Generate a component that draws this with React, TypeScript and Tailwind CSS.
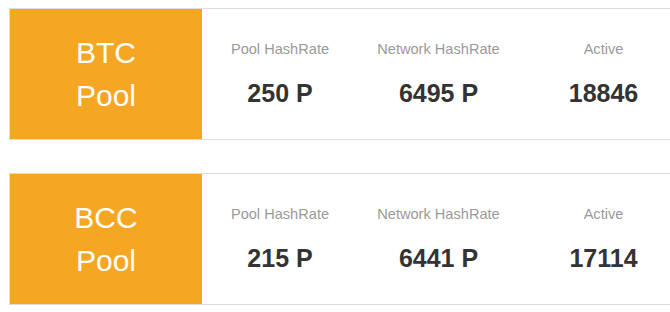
import React from "react";

type Pool = { name: string; pool: string; network: string; active: string };

const pools: Pool[] = [
  { name: "BTC", pool: "250 P", network: "6495 P", active: "18846" },
  { name: "BCC", pool: "215 P", network: "6441 P", active: "17114" },
];

function Stat({ label, value }: { label: string; value: string }) {
  return (
    <div className="flex flex-col items-center whitespace-nowrap">
      <div className="text-[14.6px] leading-[20px] text-[#9a9a9a]">{label}</div>
      <div className="mt-[19px] text-[25px] leading-[30px] font-bold text-[#333333]">{value}</div>
    </div>
  );
}

function Card({ p }: { p: Pool }) {
  return (
    <div className="flex h-[132px] border-l border-y border-[#dddddd] bg-white">
      <div className="w-[192px] shrink-0 bg-[#F5A623] text-white text-[30px] leading-[43px] text-center pt-[22px]">
        <div>{p.name}</div>
        <div>Pool</div>
      </div>
      <div className="grid grid-cols-[156px_161px_169px] pt-[30px] shrink-0">
        <Stat label="Pool HashRate" value={p.pool} />
        <Stat label="Network HashRate" value={p.network} />
        <Stat label="Active" value={p.active} />
      </div>
    </div>
  );
}

export default function App() {
  return (
    <div
      className="w-[670px] h-[312px] overflow-hidden bg-white pl-[9px] pt-[8px] flex flex-col gap-[33px]"
      style={{ fontFamily: '"Liberation Sans", Arial, sans-serif' }}
    >
      {pools.map((p) => (
        <Card key={p.name} p={p} />
      ))}
    </div>
  );
}
